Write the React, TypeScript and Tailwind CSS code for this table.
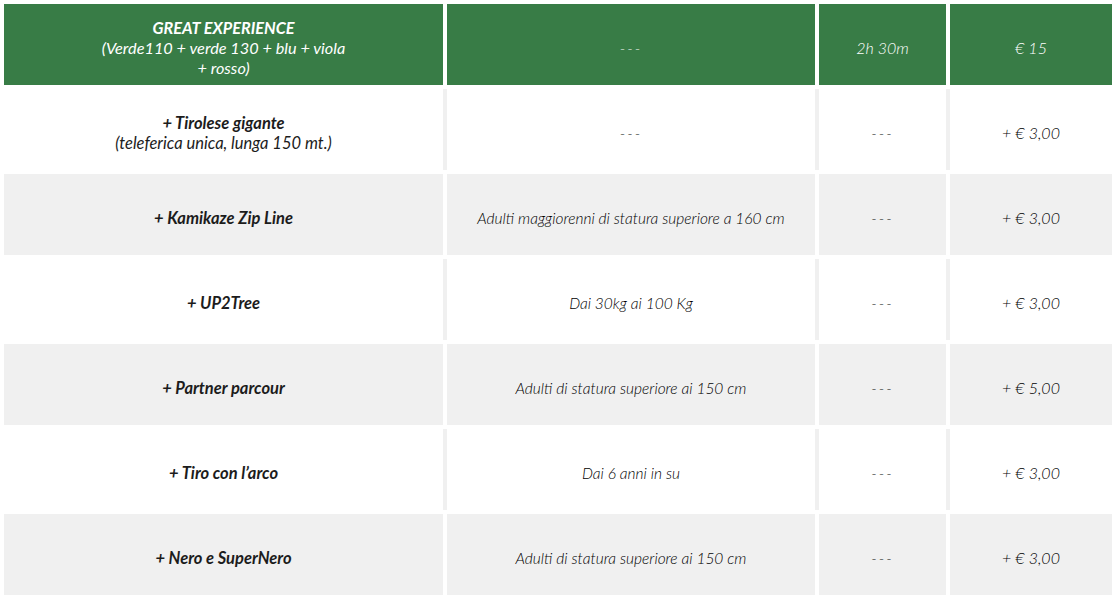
const rows = [
  {
    name: '+ Tirolese gigante',
    note: '(teleferica unica, lunga 150 mt.)',
    req: '---',
    price: '+ € 3,00',
  },
  { name: '+ Kamikaze Zip Line', req: 'Adulti maggiorenni di statura superiore a 160 cm', price: '+ € 3,00' },
  { name: '+ UP2Tree', req: 'Dai 30kg ai 100 Kg', price: '+ € 3,00' },
  { name: '+ Partner parcour', req: 'Adulti di statura superiore ai 150 cm', price: '+ € 5,00' },
  { name: '+ Tiro con l’arco', req: 'Dai 6 anni in su', price: '+ € 3,00' },
  { name: '+ Nero e SuperNero', req: 'Adulti di statura superiore ai 150 cm', price: '+ € 3,00' },
];

const cell = 'h-[81px] pt-[7px] flex flex-col items-center justify-center text-center';

const App = () => {
  return (
    <div
      className="w-[1116px] h-[600px] bg-white p-1 flex flex-col gap-1 italic text-[15.5px] leading-[20px]"
      style={{ fontFamily: 'Lato, "Open Sans", sans-serif' }}
    >
      <div className="flex gap-1 text-white">
        <div className={`${cell} w-[439px] bg-[#387c46] text-[16.3px]`}>
          <b className="font-bold">GREAT EXPERIENCE</b>
          <span className="font-normal">(Verde110 + verde 130 + blu + viola</span>
          <span className="font-normal">+ rosso)</span>
        </div>
        <div className={`${cell} w-[368px] bg-[#387c46] font-light tracking-[2px]`}>---</div>
        <div className={`${cell} w-[127px] bg-[#387c46] font-light text-[16px]`}>2h 30m</div>
        <div className={`${cell} w-[162px] bg-[#387c46] font-light text-[16px]`}>€ 15</div>
      </div>

      {rows.map((r, i) => {
        const odd = i % 2 === 1;
        const bg = odd ? 'bg-[#f0f0f0]' : 'bg-white';
        return (
          <div key={r.name} className={`flex gap-1 text-[#1c1c1c] ${odd ? 'bg-white' : 'bg-[#f0f0f0]'}`}>
            <div className={`${cell} w-[439px] ${bg} text-[16.5px]`}>
              <b className="font-bold">{r.name}</b>
              {r.note && <span className="font-normal">{r.note}</span>}
            </div>
            <div className={`${cell} w-[368px] ${bg} font-light text-black ${r.req === '---' ? 'tracking-[2px]' : ''}`}>
              {r.req}
            </div>
            <div className={`${cell} w-[127px] ${bg} font-light text-black tracking-[2px]`}>---</div>
            <div className={`${cell} w-[162px] ${bg} font-light text-black text-[16px]`}>{r.price}</div>
          </div>
        );
      })}
    </div>
  );
};

export default App;
